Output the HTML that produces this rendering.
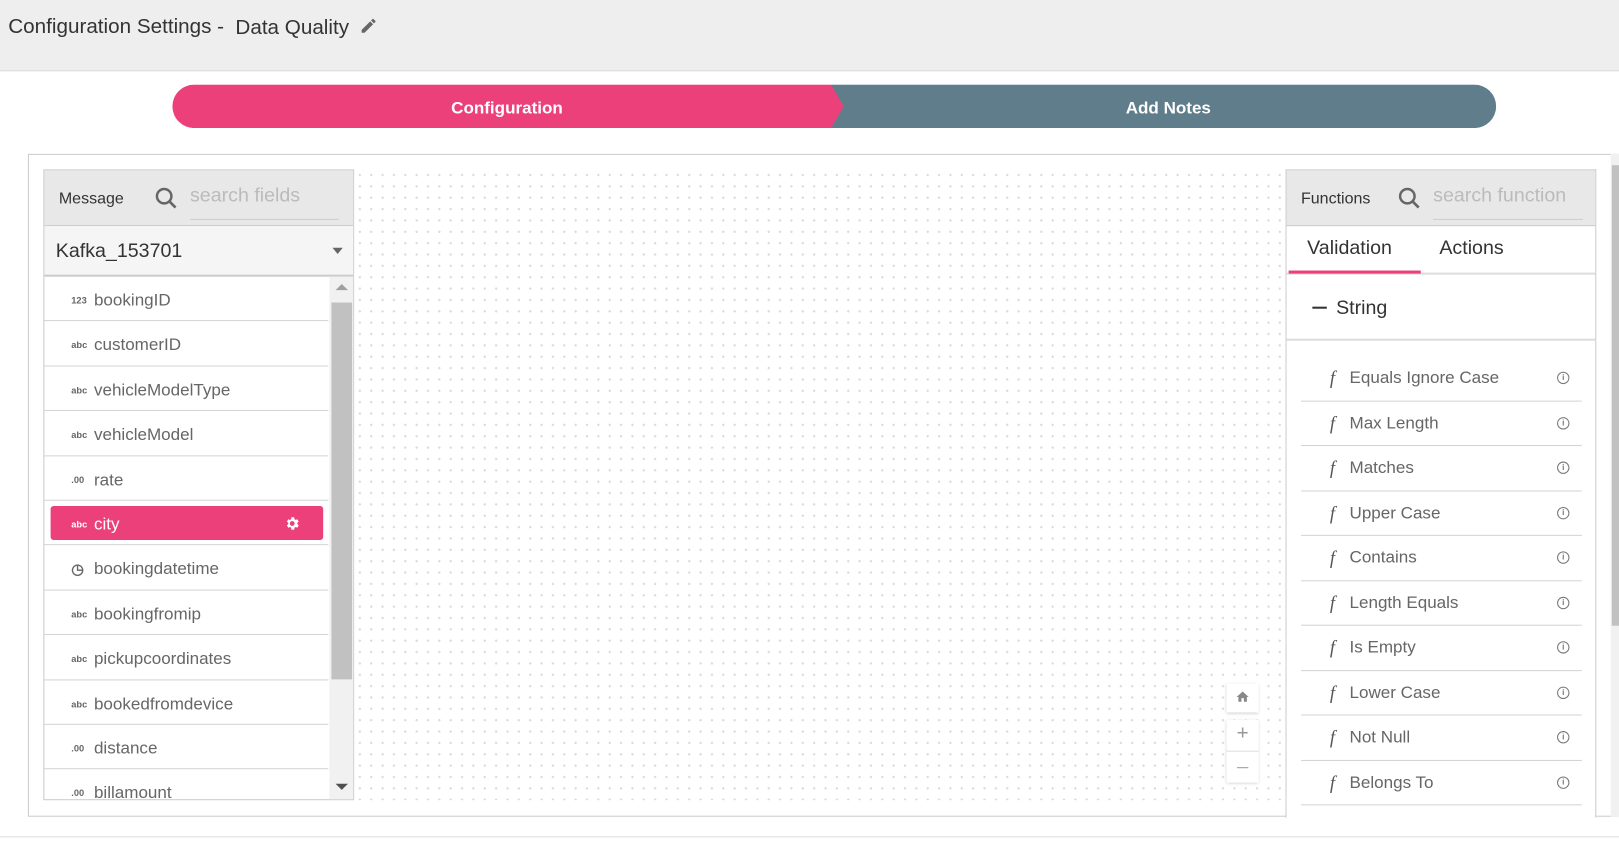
<!DOCTYPE html>
<html><head><meta charset="utf-8">
<style>
html,body{margin:0;padding:0;width:1619px;height:846px;overflow:hidden;background:#fff;font-family:"Liberation Sans",sans-serif;}
#w{position:absolute;left:0;top:0;width:1568px;height:819px;transform:scale(1.03253);transform-origin:0 0;}
.a{position:absolute;}
.hdr{left:0;top:0;width:1568px;height:68px;background:#eeeeee;border-bottom:1px solid #ddd;}
.t{font-size:19px;color:#333;white-space:nowrap;}
.dots{background-color:#fff;background-image:radial-gradient(#dadada 1px,transparent 1.2px);background-size:11px 11px;}
.row{position:absolute;left:0;width:275px;height:43.4px;border-bottom:1px solid #d4d4d4;box-sizing:border-box;font-size:16.5px;color:#666;line-height:46px;}
.row .ic{position:absolute;left:26px;font-size:9px;font-weight:bold;color:#666;letter-spacing:0}
.row .tx{position:absolute;left:48px;}
.fn{position:absolute;left:14px;width:272px;height:43.5px;border-bottom:1px solid #d4d4d4;box-sizing:border-box;font-size:16.5px;color:#666;line-height:42px;}
.fn .f{position:absolute;left:28px;font-style:italic;font-family:"Liberation Serif",serif;font-size:18px;color:#555}
.fn .tx{position:absolute;left:47px;}
.fn .i{position:absolute;left:248px;top:15px;width:10px;height:10px;border:1px solid #777;border-radius:50%;font-size:8px;line-height:10px;text-align:center;color:#777;font-weight:bold}
</style></head><body><div id="w">
<div class="a hdr"></div>
<div class="a t" style="left:8px;top:15px;font-size:20px">Configuration Settings -</div>
<div class="a t" style="left:228px;top:16px;font-size:20px">Data Quality</div>
<svg class="a" style="left:348px;top:16px" width="18" height="18" viewBox="0 0 24 24"><path fill="#666" d="M3 17.25V21h3.75L17.81 9.94l-3.75-3.75L3 17.25zM20.71 7.04a1 1 0 0 0 0-1.41l-2.34-2.34a1 1 0 0 0-1.41 0l-1.83 1.83 3.75 3.75 1.83-1.83z"/></svg>

<svg class="a" style="left:167px;top:82px" width="1282" height="42">
<path d="M1261 0a21 21 0 0 1 0 42H638L645 21L638 0Z" fill="#607d8b"/>
<path d="M21 0H638L650 21L638 42H21a21 21 0 0 1 0-42Z" fill="#ec407a"/>
</svg>
<div class="a" style="left:167px;top:96px;width:648px;text-align:center;color:#fff;font-size:16.5px;font-weight:bold">Configuration</div>
<div class="a" style="left:815px;top:96px;width:633px;text-align:center;color:#fff;font-size:16.5px;font-weight:bold">Add Notes</div>

<div class="a" style="left:27px;top:149px;width:1540px;height:642px;border:1px solid #ccc;box-sizing:border-box"></div>
<div class="a dots" style="left:343px;top:164px;width:902px;height:611px"></div>

<div class="a" style="left:42px;top:164px;width:301px;height:611px;border:1px solid #ccc;box-sizing:border-box;background:#fff;overflow:hidden">
 <div class="a" style="left:0;top:0;width:300px;height:53px;background:#e8e8e8;border-bottom:1px solid #ccc"></div>
 <div class="a" style="left:14px;top:19px;font-size:15.5px;color:#333">Message</div>
 <svg class="a" style="left:106px;top:15px" width="24" height="24" viewBox="0 0 24 24"><circle cx="10" cy="10" r="7" fill="none" stroke="#666" stroke-width="2.4"/><path d="M15 15l6 6" stroke="#666" stroke-width="2.6"/></svg>
 <div class="a" style="left:141px;top:14px;font-size:19px;color:#bbb">search fields</div>
 <div class="a" style="left:141px;top:47px;width:144px;height:1px;background:#ccc"></div>
 <div class="a" style="left:0;top:54px;width:300px;height:47px;background:#f5f5f5;border-bottom:2px solid #ccc"></div>
 <div class="a" style="left:11px;top:68px;font-size:19px;color:#333">Kafka_153701</div>
 <div class="a" style="left:279px;top:75px;width:0;height:0;border-left:5px solid transparent;border-right:5px solid transparent;border-top:6px solid #666"></div>
 <div class="a" style="left:276px;top:103px;width:24px;height:508px;background:#f1f1f1"></div>
 <div class="a" style="left:278px;top:128px;width:20px;height:365px;background:#c1c1c1"></div>
 <div class="a" style="left:282px;top:110px;border-left:6px solid transparent;border-right:6px solid transparent;border-bottom:6px solid #a0a0a0"></div>
 <div class="a" style="left:282px;top:594px;border-left:6px solid transparent;border-right:6px solid transparent;border-top:6px solid #505050"></div>
 <div class="a" style="left:0;top:103px;width:275px;height:508px">
  <div class="row" style="top:0"><span class="ic">123</span><span class="tx">bookingID</span></div>
  <div class="row" style="top:43.4px"><span class="ic">abc</span><span class="tx">customerID</span></div>
  <div class="row" style="top:86.8px"><span class="ic">abc</span><span class="tx">vehicleModelType</span></div>
  <div class="row" style="top:130.2px"><span class="ic">abc</span><span class="tx">vehicleModel</span></div>
  <div class="row" style="top:173.6px"><span class="ic">.00</span><span class="tx">rate</span></div>
  <div class="row" style="top:217px"><div class="a" style="left:6px;top:5px;width:264px;height:33px;background:#ec407a;border-radius:3px"></div><span class="ic" style="color:#fff">abc</span><span class="tx" style="color:#fff">city</span><svg class="a" style="left:232px;top:14px" width="16" height="16" viewBox="0 0 24 24"><path fill="#fff" d="M19.4 13a7.5 7.5 0 0 0 0-2l2.1-1.6-2-3.5-2.5 1a7 7 0 0 0-1.7-1L14.9 3h-4l-.4 2.9a7 7 0 0 0-1.7 1l-2.5-1-2 3.5L6.4 11a7.5 7.5 0 0 0 0 2l-2.1 1.6 2 3.5 2.5-1a7 7 0 0 0 1.7 1l.4 2.9h4l.4-2.9a7 7 0 0 0 1.7-1l2.5 1 2-3.5zM12 15.5a3.5 3.5 0 1 1 0-7 3.5 3.5 0 0 1 0 7z"/></svg></div>
  <div class="row" style="top:260.4px"><span class="ic" style="font-size:14px">◷</span><span class="tx">bookingdatetime</span></div>
  <div class="row" style="top:303.8px"><span class="ic">abc</span><span class="tx">bookingfromip</span></div>
  <div class="row" style="top:347.2px"><span class="ic">abc</span><span class="tx">pickupcoordinates</span></div>
  <div class="row" style="top:390.6px"><span class="ic">abc</span><span class="tx">bookedfromdevice</span></div>
  <div class="row" style="top:434px"><span class="ic">.00</span><span class="tx">distance</span></div>
  <div class="row" style="top:477.4px"><span class="ic">.00</span><span class="tx">billamount</span></div>
 </div>
</div>

<div class="a" style="left:1188px;top:662px;width:31px;height:28px;background:#fff;box-shadow:0 1px 3px rgba(0,0,0,.2)"></div>
<svg class="a" style="left:1196px;top:668px" width="15" height="14" viewBox="0 0 24 24"><path fill="#888" d="M10 20v-6h4v6h5v-8h3L12 3 2 12h3v8z"/></svg>
<div class="a" style="left:1188px;top:697px;width:31px;height:61px;background:#fff;box-shadow:0 1px 3px rgba(0,0,0,.2)"></div>
<div class="a" style="left:1188px;top:727px;width:31px;height:1px;background:#ddd"></div>
<div class="a" style="left:1188px;top:699px;width:31px;text-align:center;font-size:20px;color:#999">+</div>
<div class="a" style="left:1198px;top:743px;width:11px;height:1px;background:#999"></div>

<div class="a" style="left:1245px;top:164px;width:301px;height:628px;border:1px solid #ccc;border-bottom:none;box-sizing:border-box;background:#fff;overflow:hidden">
 <div class="a" style="left:0;top:0;width:300px;height:53px;background:#e8e8e8;border-bottom:1px solid #ccc"></div>
 <div class="a" style="left:14px;top:19px;font-size:15.5px;color:#333">Functions</div>
 <svg class="a" style="left:107px;top:15px" width="24" height="24" viewBox="0 0 24 24"><circle cx="10" cy="10" r="7" fill="none" stroke="#666" stroke-width="2.4"/><path d="M15 15l6 6" stroke="#666" stroke-width="2.6"/></svg>
 <div class="a" style="left:142px;top:14px;font-size:19px;color:#bbb">search function</div>
 <div class="a" style="left:142px;top:47px;width:145px;height:1px;background:#ccc"></div>
 <div class="a" style="left:20px;top:65px;font-size:19px;color:#333">Validation</div>
 <div class="a" style="left:148px;top:65px;font-size:19px;color:#333">Actions</div>
 <div class="a" style="left:0;top:99px;width:300px;height:2px;background:#ddd"></div>
 <div class="a" style="left:2px;top:97px;width:128px;height:3px;background:#ec407a"></div>
 <div class="a" style="left:25px;top:132px;width:14px;height:2px;background:#333"></div>
 <div class="a" style="left:48px;top:123px;font-size:19px;color:#333">String</div>
 <div class="a" style="left:0;top:163px;width:300px;height:2px;background:#ddd"></div>
 <div class="fn" style="top:180px"><span class="f">f</span><span class="tx">Equals Ignore Case</span><span class="i">i</span></div>
 <div class="fn" style="top:223.5px"><span class="f">f</span><span class="tx">Max Length</span><span class="i">i</span></div>
 <div class="fn" style="top:267px"><span class="f">f</span><span class="tx">Matches</span><span class="i">i</span></div>
 <div class="fn" style="top:310.5px"><span class="f">f</span><span class="tx">Upper Case</span><span class="i">i</span></div>
 <div class="fn" style="top:354px"><span class="f">f</span><span class="tx">Contains</span><span class="i">i</span></div>
 <div class="fn" style="top:397.5px"><span class="f">f</span><span class="tx">Length Equals</span><span class="i">i</span></div>
 <div class="fn" style="top:441px"><span class="f">f</span><span class="tx">Is Empty</span><span class="i">i</span></div>
 <div class="fn" style="top:484.5px"><span class="f">f</span><span class="tx">Lower Case</span><span class="i">i</span></div>
 <div class="fn" style="top:528px"><span class="f">f</span><span class="tx">Not Null</span><span class="i">i</span></div>
 <div class="fn" style="top:571.5px"><span class="f">f</span><span class="tx">Belongs To</span><span class="i">i</span></div>
</div>
<div class="a" style="left:1560px;top:149px;width:8px;height:642px;background:#f1f1f1"></div>
<div class="a" style="left:1561px;top:160px;width:7px;height:446px;background:#c1c1c1"></div>
<div class="a" style="left:0;top:810px;width:1568px;height:1px;background:#ddd"></div>
</div></body></html>
